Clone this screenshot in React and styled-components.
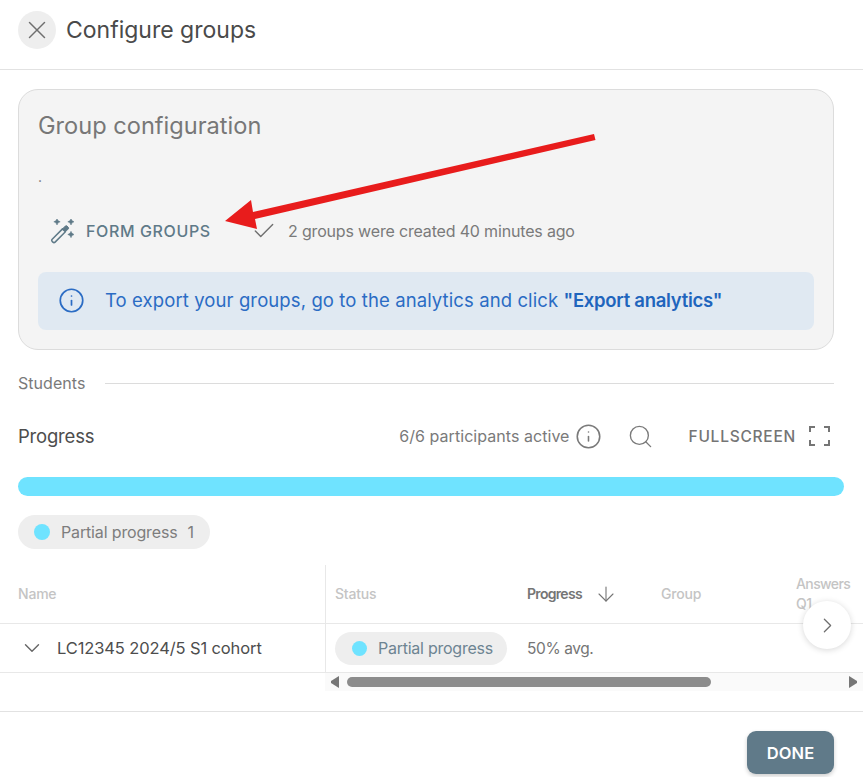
import React from "react";
import styled, { createGlobalStyle } from "styled-components";
import { X, Check, Info, Search, ChevronDown, ChevronRight, ArrowDown } from "lucide-react";

const Global = createGlobalStyle`
  html, body { margin: 0; padding: 0; background: #fff; }
  body { font-family: "Inter", "Noto Sans", sans-serif; overflow: hidden; }
  * { box-sizing: border-box; }
`;

const Page = styled.div`
  position: relative;
  width: 863px;
  height: 777px;
  overflow: hidden;
  background: #fff;
  display: flex;
  flex-direction: column;
`;
const Header = styled.header`
  height: 70px;
  flex: none;
  display: flex;
  align-items: center;
  gap: 10px;
  padding: 0 18px 9px;
  border-bottom: 1px solid #e2e2e2;
`;
const CloseButton = styled.button`
  width: 38px;
  height: 38px;
  border: 0;
  padding: 0;
  border-radius: 50%;
  background: #eeeeee;
  color: #6f6f6f;
  display: flex;
  align-items: center;
  justify-content: center;
`;
const Title = styled.h1`
  margin: 0;
  font-size: 23px;
  font-weight: 400;
  color: #4a4a4a;
`;
const Card = styled.section`
  margin: 19px 29px 0 18px;
  height: 261px;
  flex: none;
  padding: 20px 19px 19px;
  background: #f4f4f4;
  border: 1px solid #dcdcdc;
  border-radius: 20px;
  display: flex;
  flex-direction: column;
`;
const CardTitle = styled.h2`
  margin: 0;
  height: 32px;
  line-height: 32px;
  font-size: 23.6px;
  font-weight: 400;
  color: #777;
`;
const Dot = styled.div`
  height: 20px;
  margin-top: 25px;
  line-height: 20px;
  font-size: 14px;
  color: #777;
`;
const ActionRow = styled.div`
  margin-top: 29px;
  height: 30px;
  display: flex;
  align-items: center;
  padding-left: 12px;
`;
const FormButton = styled.div`
  display: flex;
  align-items: center;
  gap: 12px;
  width: 201px;
  font-size: 16px;
  font-weight: 500;
  letter-spacing: 0.62px;
  color: #5f7a88;
`;
const Status = styled.div`
  display: flex;
  align-items: center;
  gap: 11px;
  font-size: 16px;
  letter-spacing: -0.17px;
  color: #7a7a7a;
`;
const InfoBox = styled.div`
  margin-top: 26px;
  height: 58px;
  flex: none;
  display: flex;
  align-items: center;
  gap: 20px;
  padding: 0 0 2px 20px;
  background: #e0e9f2;
  border-radius: 8px;
  font-size: 18.5px;
  letter-spacing: 0.1px;
  color: #2b6cc4;
  b { font-weight: 600; color: #1f65bd; letter-spacing: -0.28px; }
`;
const Divider = styled.div`
  margin: 23px 29px 0 18px;
  height: 20px;
  display: flex;
  align-items: center;
  gap: 20px;
  font-size: 16px;
  letter-spacing: 0.05px;
  color: #7a7a7a;
  &::after { content: ""; flex: 1; height: 1px; background: #dcdcdc; }
`;
const ProgressHead = styled.div`
  margin: 29px 29px 0 18px;
  height: 28px;
  display: flex;
  align-items: center;
`;
const ProgressTitle = styled.h3`
  margin: 0;
  font-size: 18.5px;
  font-weight: 400;
  letter-spacing: -0.2px;
  color: #4d4d4d;
  flex: 1;
`;
const Meta = styled.div`
  display: flex;
  align-items: center;
  gap: 5px;
  font-size: 16px;
  letter-spacing: 0.05px;
  color: #7a7a7a;
  margin-right: 25px;
`;
const SearchSlot = styled.span`
  display: flex;
  margin-right: 35px;
  color: #7a7a7a;
`;
const Fullscreen = styled.div`
  display: flex;
  align-items: center;
  gap: 13px;
  font-size: 15.5px;
  font-weight: 500;
  letter-spacing: 0.75px;
  color: #757575;
  svg { margin-right: 4px; }
`;
const Bar = styled.div`
  margin: 27px 19px 0 18px;
  height: 19px;
  flex: none;
  border-radius: 10px;
  background: #6fe3ff;
`;
const Chip = styled.div`
  display: inline-flex;
  align-items: center;
  align-self: ${(p) => (p.$row ? "auto" : "flex-start")};
  height: ${(p) => (p.$row ? 33 : 34)}px;
  margin: ${(p) => (p.$row ? "0" : "19px 0 0 18px")};
  padding: ${(p) => (p.$row ? "0 14px 0 17px" : "0 16px 0 16px")};
  gap: 11px;
  border-radius: 17px;
  background: #eeeeee;
  font-size: 16px;
  letter-spacing: ${(p) => (p.$row ? "-0.25px" : "-0.15px")};
  color: ${(p) => (p.$row ? "#6d8492" : "#7d7d7d")};
  white-space: nowrap;
`;
const Swatch = styled.span`
  width: ${(p) => (p.$row ? 15 : 16)}px;
  height: ${(p) => (p.$row ? 15 : 16)}px;
  border-radius: 50%;
  background: #6fe3ff;
  flex: none;
`;
const Count = styled.span`
  margin-left: -1px;
`;
const Table = styled.div`
  margin-top: 16px;
  flex: none;
  display: grid;
  grid-template-columns: 326px 192px 134px 135px 76px;
  grid-template-rows: 59px 49px;
  overflow: hidden;
`;
const Th = styled.div`
  display: flex;
  align-items: center;
  gap: 12px;
  padding-left: ${(p) => p.$pad || 9}px;
  font-size: 14px;
  font-weight: ${(p) => (p.$active ? 600 : 500)};
  letter-spacing: ${(p) => p.$ls ?? -0.2}px;
  line-height: 20px;
  color: ${(p) => (p.$active ? "#757575" : "#c4c4c4")};
  border-bottom: 1px solid #e8e8e8;
  border-right: ${(p) => (p.$sep ? "1px solid #e8e8e8" : "0")};
`;
const Td = styled.div`
  display: flex;
  align-items: center;
  gap: 12px;
  padding-left: ${(p) => p.$pad || 9}px;
  font-size: ${(p) => p.$size || 16}px;
  letter-spacing: ${(p) => p.$ls ?? -0.25}px;
  color: ${(p) => p.$color || "#4d4d4d"};
  white-space: nowrap;
  border-bottom: 1px solid #e8e8e8;
  border-right: ${(p) => (p.$sep ? "1px solid #e8e8e8" : "0")};
`;
const ScrollArea = styled.div`
  margin-left: 325px;
  height: 18px;
  flex: none;
  display: flex;
  align-items: center;
  background: #fafafa;
`;
const Thumb = styled.div`
  margin-left: 7px;
  width: 364px;
  height: 10px;
  border-radius: 5px;
  background: #8c8c8c;
`;
const Spacer = styled.div`
  flex: 1;
`;
const Tri = styled.svg`
  width: 10px;
  height: 12px;
  flex: none;
  margin: ${(p) => p.$m};
`;
const Footer = styled.footer`
  margin-top: 20px;
  flex: 1;
  border-top: 1px solid #e2e2e2;
  display: flex;
  justify-content: flex-end;
  align-items: flex-start;
  padding: 19px 29px 0 0;
`;
const Done = styled.button`
  width: 87px;
  height: 43px;
  border: 0;
  border-radius: 9px;
  background: #607a89;
  color: #fff;
  font-family: inherit;
  font-size: 16.5px;
  font-weight: 600;
  letter-spacing: 0.1px;
  box-shadow: 0 2px 4px rgba(0, 0, 0, 0.2);
`;
const NextButton = styled.button`
  position: absolute;
  left: 803px;
  top: 601px;
  width: 48px;
  height: 48px;
  border: 0;
  padding: 0;
  border-radius: 50%;
  background: #fff;
  color: #6f6f6f;
  display: flex;
  align-items: center;
  justify-content: center;
  box-shadow: 0 1px 6px rgba(0, 0, 0, 0.16);
`;
const ArrowOverlay = styled.svg`
  position: absolute;
  left: 0;
  top: 0;
  pointer-events: none;
`;

const FrameIcon = () => (
  <svg width="21" height="20" viewBox="0 0 21 20" fill="none" stroke="#757575" strokeWidth="2">
    <path d="M1 6V1H6M15 1H20V6M1 14V19H6M15 19H20V14" />
  </svg>
);

const Sparkle = ({ x, y, r = 3.2 }) => (
  <path
    d={`M${x} ${y - r}Q${x + 0.5} ${y - 0.5} ${x + r} ${y}Q${x + 0.5} ${y + 0.5} ${x} ${y + r}Q${x - 0.5} ${y + 0.5} ${x - r} ${y}Q${x - 0.5} ${y - 0.5} ${x} ${y - r}Z`}
    fill="#5f7a88"
    stroke="#5f7a88"
    strokeWidth="0.5"
  />
);

const WandIcon = () => (
  <svg width="24" height="25" viewBox="0 0 24 25" fill="none">
    <path d="M2.2 20.2 L12.5 9.9 L15.4 12.8 L5.1 23.1 Q4 24.2 2.9 23.1 L2.2 22.4 Q1.1 21.3 2.2 20.2Z" stroke="#5f7a88" strokeWidth="1.5" strokeLinejoin="round" />
    <path d="M12.5 9.9 L15.3 7.1 Q16.2 6.2 17.1 7.1 L18.2 8.2 Q19.1 9.1 18.2 10 L15.4 12.8Z" fill="#5f7a88" stroke="#5f7a88" strokeWidth="1" strokeLinejoin="round" />
    <Sparkle x={7} y={2.8} />
    <Sparkle x={21} y={2.8} />
    <Sparkle x={21} y={15.5} />
  </svg>
);

export default function App() {
  return (
    <Page>
      <Global />
      <Header>
        <CloseButton aria-label="Close"><X size={30} strokeWidth={1.2} /></CloseButton>
        <Title>Configure groups</Title>
      </Header>
      <Card>
        <CardTitle>Group configuration</CardTitle>
        <Dot>.</Dot>
        <ActionRow>
          <FormButton><WandIcon />FORM GROUPS</FormButton>
          <Status><Check size={26} strokeWidth={1.3} color="#6f6f6f" />2 groups were created 40 minutes ago</Status>
        </ActionRow>
        <InfoBox>
          <Info size={27} strokeWidth={1.5} />
          <span>To export your groups, go to the analytics and click <b>"Export analytics"</b></span>
        </InfoBox>
      </Card>
      <Divider>Students</Divider>
      <ProgressHead>
        <ProgressTitle>Progress</ProgressTitle>
        <Meta>6/6 participants active <Info size={27} strokeWidth={1.4} /></Meta>
        <SearchSlot><Search size={27} strokeWidth={1.2} /></SearchSlot>
        <Fullscreen>FULLSCREEN <FrameIcon /></Fullscreen>
      </ProgressHead>
      <Bar />
      <Chip><Swatch />Partial progress<Count>1</Count></Chip>
      <Table>
        <Th $pad={18} $sep>Name</Th>
        <Th>Status</Th>
        <Th $active $ls={-0.7}>Progress <ArrowDown size={24} strokeWidth={1.1} /></Th>
        <Th>Group</Th>
        <Th $ls={-0.6}>Answers Q1</Th>
        <Td $pad={19} $sep $size={16.5} $ls={-0.12}><ChevronDown size={26} strokeWidth={1.3} color="#666" />LC12345 2024/5 S1 cohort</Td>
        <Td><Chip $row><Swatch $row />Partial progress</Chip></Td>
        <Td $color="#757575" $size={15.5} $ls={-0.4}>50% avg.</Td>
        <Td />
        <Td />
      </Table>
      <ScrollArea>
        <Tri $m="0 0 0 5px" viewBox="0 0 10 12"><path d="M9 0V12L1 7V5Z" fill="#777" /></Tri>
        <Thumb />
        <Spacer />
        <Tri $m="0 5px 0 0" viewBox="0 0 10 12"><path d="M1 0V12L9 7V5Z" fill="#777" /></Tri>
      </ScrollArea>
      <Footer><Done>DONE</Done></Footer>
      <NextButton aria-label="Next"><ChevronRight size={25} strokeWidth={1.2} /></NextButton>
      <ArrowOverlay width="863" height="777" viewBox="0 0 863 777">
        <path d="M594 134 L595.5 140 L255 219 L257 229 L225 221 L251 200 L253 212 Z" fill="#e81c1c" />
      </ArrowOverlay>
    </Page>
  );
}
